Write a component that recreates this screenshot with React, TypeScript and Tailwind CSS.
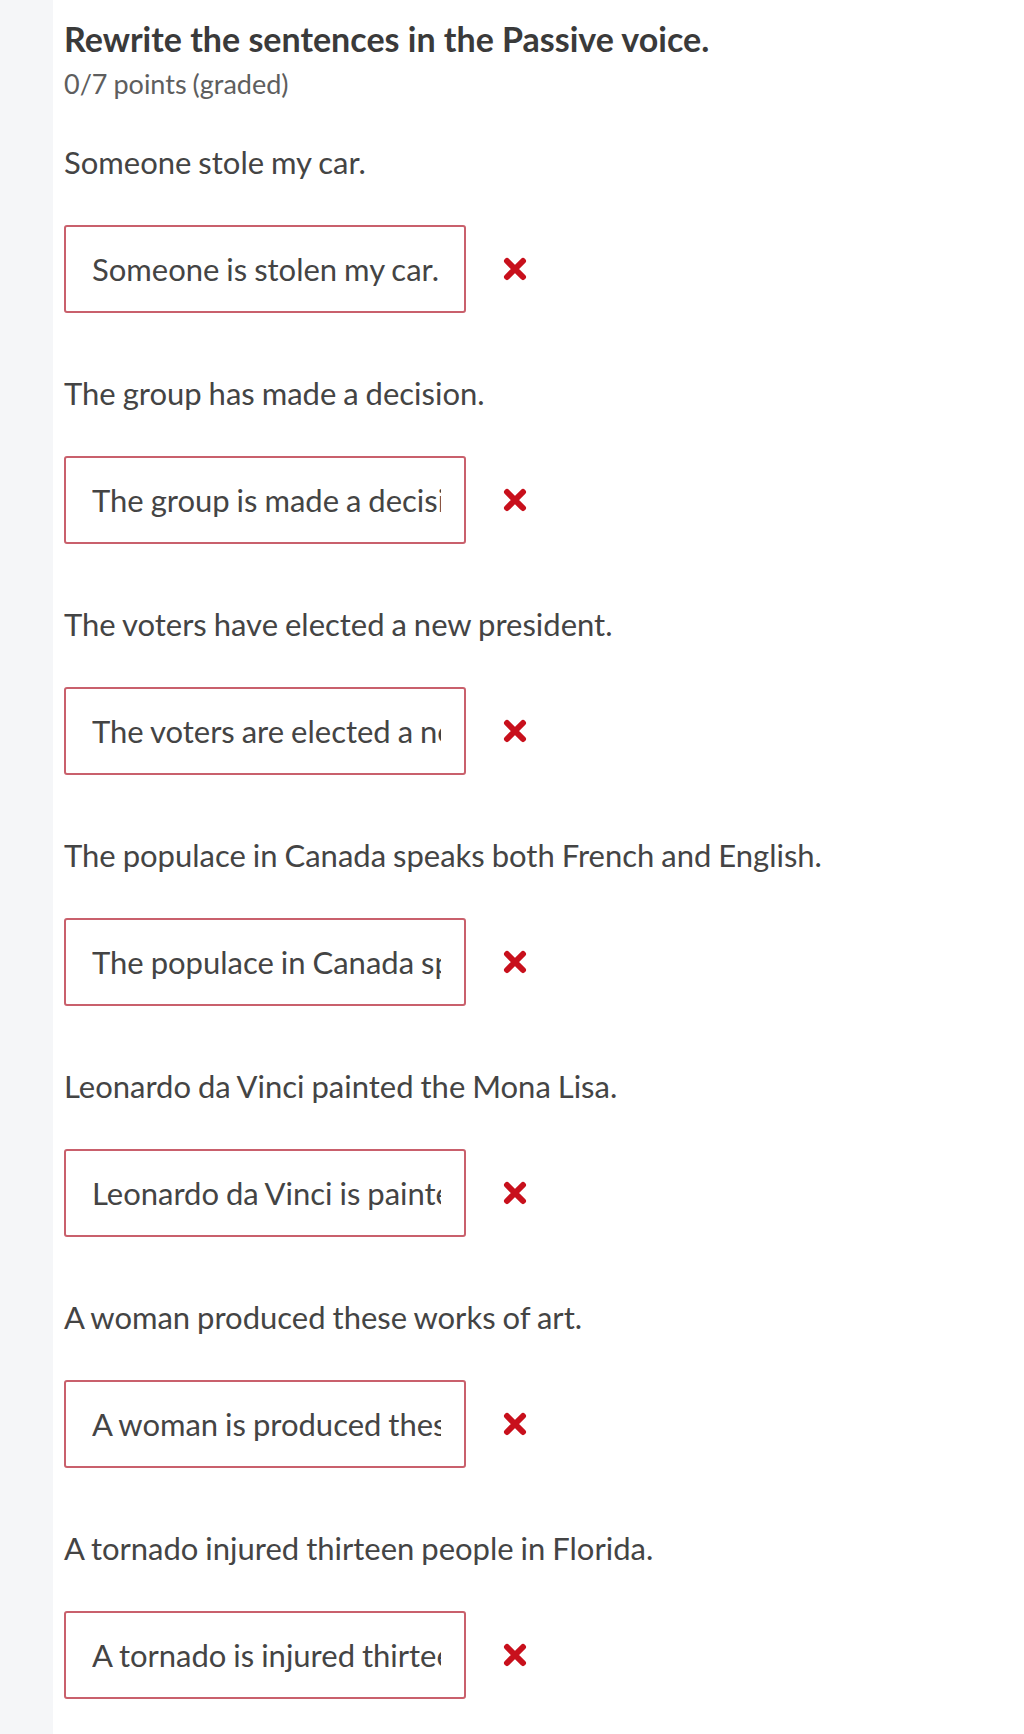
import React from "react";

const items = [
  { q: "Someone stole my car.", a: "Someone is stolen my car." },
  { q: "The group has made a decision.", a: "The group is made a decision." },
  { q: "The voters have elected a new president.", a: "The voters are elected a new president." },
  { q: "The populace in Canada speaks both French and English.", a: "The populace in Canada spoken both French and English." },
  { q: "Leonardo da Vinci painted the Mona Lisa.", a: "Leonardo da Vinci is painted the Mona Lisa." },
  { q: "A woman produced these works of art.", a: "A woman is produced these works of art." },
  { q: "A tornado injured thirteen people in Florida.", a: "A tornado is injured thirteen people in Florida." },
];

function WrongIcon() {
  return (
    <svg width="26" height="24" viewBox="0 0 26 24" className="shrink-0">
      <path d="M5 4 L21 20 M21 4 L5 20" stroke="#c8101c" strokeWidth="6" strokeLinecap="round" />
    </svg>
  );
}

export default function App() {
  return (
    <div className="flex min-h-[1734px] bg-white font-['Lato','Open_Sans',sans-serif]">
      <div className="w-[53px] shrink-0 bg-[#f5f6f8]" />
      <div className="flex-1 pl-[11px] pt-[19px]">
        <h2 className="text-[34px] leading-[40px] font-bold text-[#3a3a3a]">
          Rewrite the sentences in the Passive voice.
        </h2>
        <div className="mt-[11px] text-[27px] leading-[28px] text-[#5e5e5e] [word-spacing:-1px]">0/7 points (graded)</div>

        <div className="mt-[44px]">
          {items.map((it, i) => (
            <div key={i} className="pb-[60px]">
              <p className="text-[31px] leading-[40px] text-[#444] [word-spacing:-1px]">{it.q}</p>
              <div className="mt-[43px] flex items-center gap-[36px]">
                <input
                  readOnly
                  value={it.a}
                  className="h-[88px] w-[402px] rounded-[3px] border-2 border-[#c9606c] bg-white pl-[26px] pr-[23px] text-[31px] text-[#444] outline-none [word-spacing:-1px]"
                />
                <WrongIcon />
              </div>
            </div>
          ))}
        </div>
      </div>
    </div>
  );
}
